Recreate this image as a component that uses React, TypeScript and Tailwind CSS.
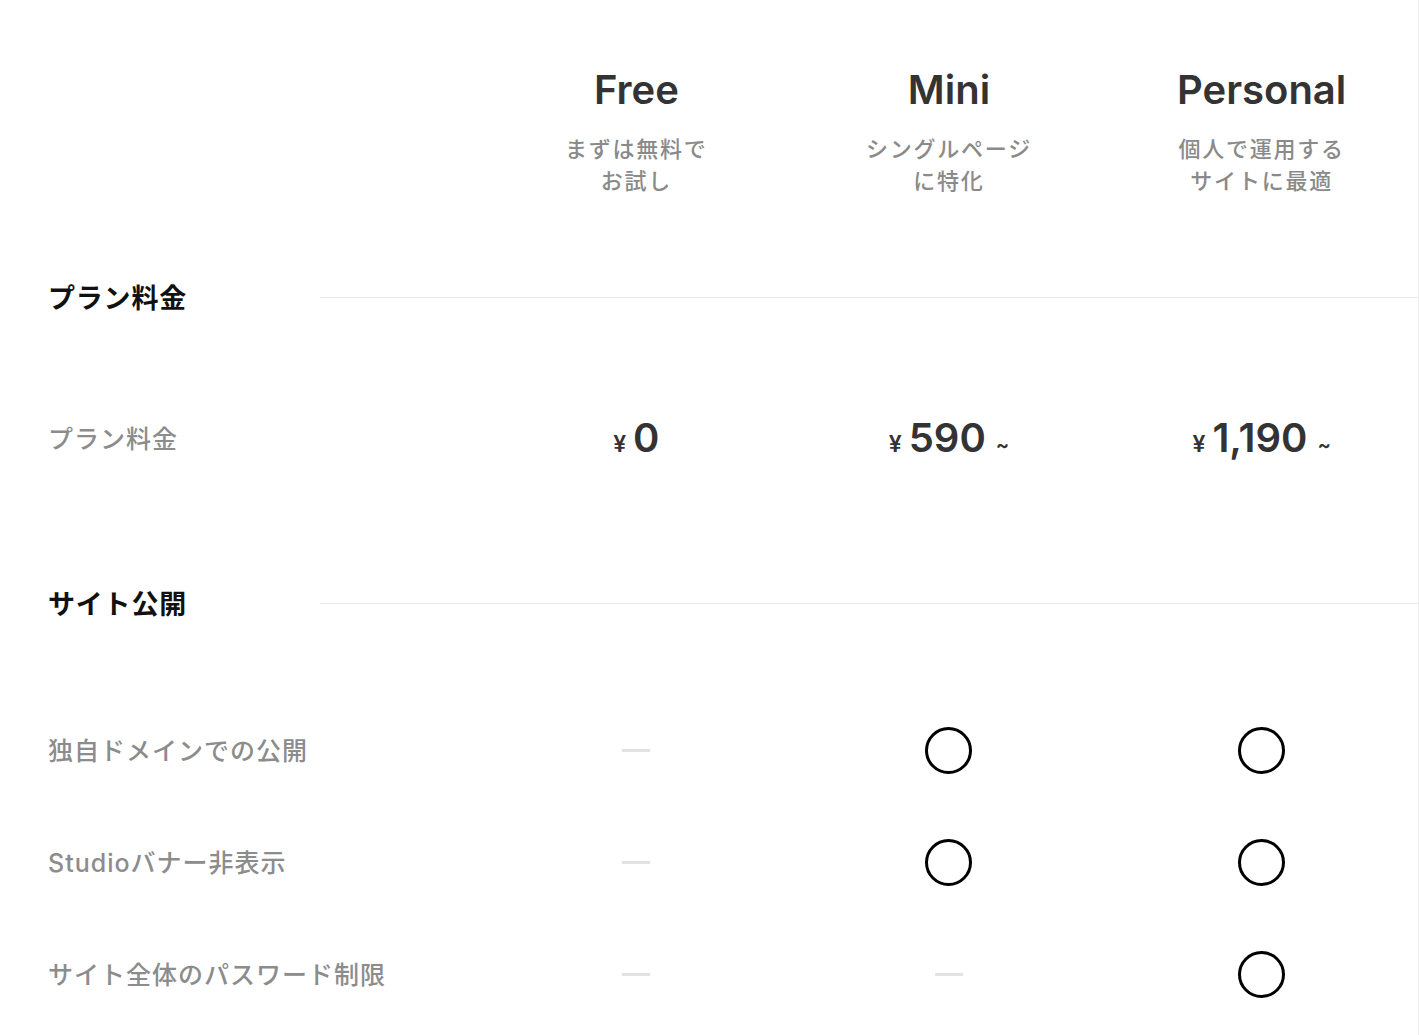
import React from "react";

const font = { fontFamily: 'Inter, "Noto Sans CJK JP", sans-serif' };

const plans = [
  { name: "Free", sub: ["まずは無料で", "お試し"], price: "0", from: false },
  { name: "Mini", sub: ["シングルページ", "に特化"], price: "590", from: true },
  { name: "Personal", sub: ["個人で運用する", "サイトに最適"], price: "1,190", from: true },
];

const features: { label: string; v: boolean[] }[] = [
  { label: "独自ドメインでの公開", v: [false, true, true] },
  { label: "Studioバナー非表示", v: [false, true, true] },
  { label: "サイト全体のパスワード制限", v: [false, false, true] },
];

function Circle() {
  return <div className="w-[47px] h-[47px] rounded-full border-[3px] border-black" />;
}

function Dash() {
  return <div className="w-[28px] h-[3px] bg-[#e3e3e3]" />;
}

function SectionHeader({ title, mt }: { title: string; mt: string }) {
  return (
    <div className={`flex items-center h-[40px] ${mt}`}>
      <div className="w-[320px] shrink-0 pl-12 pt-[4px] text-[27px] font-bold tracking-[0.03em] text-[#111]">
        {title}
      </div>
      <div className="flex-1 h-px bg-[#e8e8e8]" />
    </div>
  );
}

export default function App() {
  return (
    <div className="w-full min-h-[1035px] bg-white border-r border-[#ececec] overflow-hidden" style={font}>
      {/* header */}
      <div className="grid grid-cols-[480px_1fr_1fr_1fr] pt-[66px]">
        <div />
        {plans.map((p) => (
          <div key={p.name} className="flex flex-col items-center">
            <div className="h-[48px] leading-[48px] text-[40px] font-semibold text-[#333]">{p.name}</div>
            <div className="mt-[19px] text-center text-[22px] leading-[32px] font-medium tracking-[0.08em] text-[#8a8a8a]">
              {p.sub.map((s) => (
                <div key={s}>{s}</div>
              ))}
            </div>
          </div>
        ))}
      </div>

      <SectionHeader title="プラン料金" mt="mt-[80px]" />

      <div className="grid grid-cols-[480px_1fr_1fr_1fr] h-[242px] items-center pt-[4px]">
        <div className="pl-12 text-[25px] font-medium tracking-[0.04em] text-[#8c8c8c]">プラン料金</div>
        {plans.map((p) => (
          <div key={p.name} className="flex justify-center items-baseline text-[#333]">
            <span className="text-[23px] font-semibold mr-[7px]">¥</span>
            <span className="text-[40px] font-semibold leading-none">{p.price}</span>
            {p.from && <span className="text-[20px] font-semibold ml-[10px]">~</span>}
          </div>
        ))}
      </div>

      <SectionHeader title="サイト公開" mt="mt-[24px]" />

      <div className="mt-[71px]">
        {features.map((f) => (
          <div key={f.label} className="grid grid-cols-[480px_1fr_1fr_1fr] h-[112px] items-center">
            <div className="pl-12 pt-[4px] text-[25px] font-medium tracking-[0.04em] text-[#8c8c8c] whitespace-nowrap">
              {f.label}
            </div>
            {f.v.map((v, i) => (
              <div key={i} className="flex justify-center items-center">
                {v ? <Circle /> : <Dash />}
              </div>
            ))}
          </div>
        ))}
      </div>
    </div>
  );
}
